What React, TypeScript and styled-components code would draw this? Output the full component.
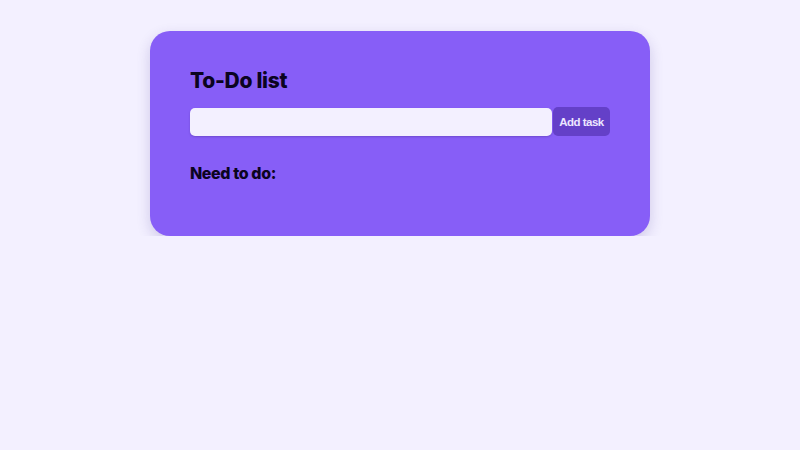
import React from "react";
import styled, { createGlobalStyle } from "styled-components";

const Global = createGlobalStyle`
  html, body { margin: 0; padding: 0; background: #f3f0ff; }
  body { font-family: Inter, "Noto Sans", sans-serif; }
`;

const Page = styled.div`
  display: flex;
  justify-content: center;
  padding-top: 31px;
`;

const Card = styled.div`
  width: 500px;
  box-sizing: border-box;
  padding: 38px 40px 53px;
  background: #875ef7;
  border-radius: 20px;
  box-shadow: 0 5px 14px rgba(60, 40, 140, 0.2);
`;

const Title = styled.h1`
  margin: 0 0 14px;
  font-family: Inter, "Noto Sans", sans-serif;
  font-weight: 800;
  font-size: 21px;
  line-height: 24px;
  letter-spacing: -0.3px;
  color: #0b0420;
`;

const Row = styled.div`
  display: flex;
  align-items: flex-end;
  gap: 1px;
`;

const Input = styled.input`
  flex: 1;
  height: 28px;
  box-sizing: border-box;
  border: none;
  border-radius: 5px;
  background: #f3f0ff;
  outline: none;
  padding: 0 8px;
  box-shadow: 0 1px 2px rgba(40, 20, 100, 0.25);
`;

const Button = styled.button`
  width: 57px;
  height: 29px;
  padding: 0;
  border: none;
  border-radius: 5px;
  background: #6440c8;
  color: #ece6ff;
  font-family: "Liberation Sans", Arial, sans-serif;
  font-weight: 700;
  font-size: 11.5px;
  letter-spacing: -0.5px;
`;

const Sub = styled.h2`
  margin: 27px 0 0;
  font-family: Inter, "Noto Sans", sans-serif;
  font-weight: 800;
  font-size: 16px;
  line-height: 20px;
  letter-spacing: -0.4px;
  color: #0b0420;
`;

export default function App() {
  return (
    <>
      <Global />
      <Page>
        <Card>
          <Title>To-Do list</Title>
          <Row>
            <Input />
            <Button>Add task</Button>
          </Row>
          <Sub>Need to do:</Sub>
        </Card>
      </Page>
    </>
  );
}
